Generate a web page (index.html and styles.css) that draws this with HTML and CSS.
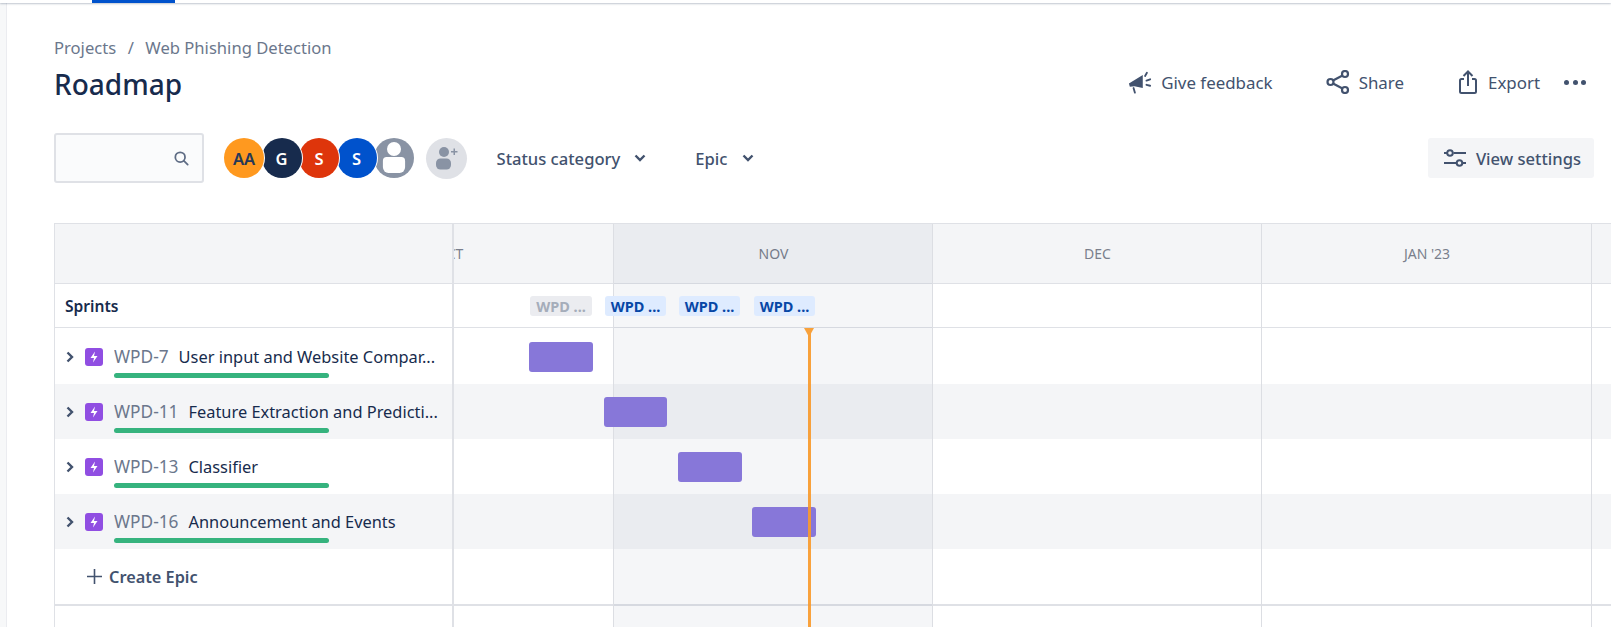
FILE: index.html
```html
<!DOCTYPE html>
<html>
  <head>
    <title>Roadmap</title>
    <link rel="stylesheet" href="styles.css">
  </head>
  <body>
    <div class="topbar"><span class="topbar-tab"></span></div>
    <div class="shell">
      <div class="sidebar"></div>
      <div class="page">
        <div class="page-head">
          <div>
            <div class="crumbs"><span>Projects</span><span class="crumb-sep">/</span><span>Web Phishing Detection</span></div>
            <h1 class="title">Roadmap</h1>
          </div>
          <div class="actions">
            <span class="action action-feedback">
              <svg width="24" height="23" viewBox="0 0 26 24"><path d="M1 13 16 4v14L7 16l-5 0.5z" fill="#42526e"/><path d="M6 18l1.5 5" stroke="#42526e" stroke-width="2" stroke-linecap="round"/><path d="M18.5 5l2-3.5M20 10l4-1.5M20 14.5l4 1" stroke="#42526e" stroke-width="2" stroke-linecap="round"/></svg>
              Give feedback
            </span>
            <span class="action action-share">
              <svg width="24" height="24" viewBox="0 0 24 24" fill="none" stroke="#42526e" stroke-width="2.2"><circle cx="4.5" cy="12" r="3"/><circle cx="19" cy="4" r="3"/><circle cx="19" cy="20" r="3"/><path d="M7 10.5 16.5 5.5M7 13.5l9.5 5"/></svg>
              Share
            </span>
            <span class="action action-export">
              <svg width="18" height="24" viewBox="0 0 18 24" fill="none" stroke="#42526e" stroke-width="2"><path d="M5 9H2.5a1.5 1.5 0 0 0-1.500 1.500V21.500A1.500 1.500 0 0 0 2.500 23h13a1.500 1.500 0 0 0 1.500-1.500V10.500A1.500 1.500 0 0 0 15.500 9H13"/><path d="M9 16V2M4.500 6 9 1.500 13.500 6"/></svg>
              Export
            </span>
            <span class="dots"><i></i><i></i><i></i></span>
          </div>
        </div>

        <div class="toolbar">
          <div class="search">
            <svg width="15" height="15" viewBox="0 0 17 17" fill="none" stroke="#5e6c84" stroke-width="2"><circle cx="7" cy="7" r="5.500"/><path d="M11 11l4.500 4.500" stroke-linecap="round"/></svg>
          </div>
          <div class="avatars">
            <span class="avatar avatar-orange">AA</span>
            <span class="avatar avatar-navy">G</span>
            <span class="avatar avatar-red">S</span>
            <span class="avatar avatar-blue">S</span>
            <span class="avatar avatar-ghost">
              <svg width="40" height="40" viewBox="0 0 40 40"><circle cx="20" cy="11" r="7" fill="#fff"/><path d="M8 23a4 4 0 0 1 4-4h16a4 4 0 0 1 4 4v6a6 6 0 0 1-6 6H14a6 6 0 0 1-6-6z" fill="#fff" transform="translate(1.500 0) scale(.925 1)"/></svg>
            </span>
          </div>
          <span class="add-user">
            <svg width="26" height="26" viewBox="0 0 26 26" fill="#8993a4"><circle cx="11" cy="7" r="5"/><rect x="3" y="13.500" width="15" height="11" rx="4.500"/><path d="M18 6h2.500V3.500h1.500V6h2.500v1.500H22V10h-1.500V7.500H18z"/></svg>
          </span>
          <span class="filter filter-status">Status category<svg class="caret" width="12" height="8" viewBox="0 0 12 8" fill="none" stroke="#42526e" stroke-width="2.400"><path d="M1.500 1.500 6 6l4.500-4.500"/></svg></span>
          <span class="filter filter-epic">Epic<svg class="caret" width="12" height="8" viewBox="0 0 12 8" fill="none" stroke="#42526e" stroke-width="2.400"><path d="M1.500 1.500 6 6l4.500-4.500"/></svg></span>
          <span class="view-settings">
            <svg width="24" height="18" viewBox="0 0 24 18" fill="none" stroke="#42526e" stroke-width="2"><path d="M1 4h3M10.500 4H23M1 14h12.500M20 14h3"/><circle cx="7" cy="4" r="2.800"/><circle cx="16.500" cy="14" r="2.800"/></svg>
            View settings
          </span>
        </div>

        <div class="roadmap">
          <div class="list">
            <div class="list-head"></div>
            <div class="list-sprints">Sprints</div>
            <div class="epic">
              <svg class="chev" width="8" height="12" viewBox="0 0 8 12" fill="none" stroke="#42526e" stroke-width="2.400"><path d="M1.500 1.500 6 6l-4.500 4.500"/></svg>
              <svg class="epic-icon" width="18" height="18" viewBox="0 0 18 18"><rect width="18" height="18" rx="3" fill="#904ee2"/><path d="M10 3.500 5.500 10H9l-1 4.500L12.500 8H9z" fill="#fff"/></svg>
              <div class="epic-body">
                <div class="epic-text"><span class="epic-key">WPD-7</span>User input and Website Compar...</div>
                <div class="progress"></div>
              </div>
            </div>
            <div class="epic alt">
              <svg class="chev" width="8" height="12" viewBox="0 0 8 12" fill="none" stroke="#42526e" stroke-width="2.400"><path d="M1.500 1.500 6 6l-4.500 4.500"/></svg>
              <svg class="epic-icon" width="18" height="18" viewBox="0 0 18 18"><rect width="18" height="18" rx="3" fill="#904ee2"/><path d="M10 3.500 5.500 10H9l-1 4.500L12.500 8H9z" fill="#fff"/></svg>
              <div class="epic-body">
                <div class="epic-text"><span class="epic-key">WPD-11</span>Feature Extraction and Predicti...</div>
                <div class="progress"></div>
              </div>
            </div>
            <div class="epic">
              <svg class="chev" width="8" height="12" viewBox="0 0 8 12" fill="none" stroke="#42526e" stroke-width="2.400"><path d="M1.500 1.500 6 6l-4.500 4.500"/></svg>
              <svg class="epic-icon" width="18" height="18" viewBox="0 0 18 18"><rect width="18" height="18" rx="3" fill="#904ee2"/><path d="M10 3.500 5.500 10H9l-1 4.500L12.500 8H9z" fill="#fff"/></svg>
              <div class="epic-body">
                <div class="epic-text"><span class="epic-key">WPD-13</span>Classifier</div>
                <div class="progress"></div>
              </div>
            </div>
            <div class="epic alt">
              <svg class="chev" width="8" height="12" viewBox="0 0 8 12" fill="none" stroke="#42526e" stroke-width="2.400"><path d="M1.500 1.500 6 6l-4.500 4.500"/></svg>
              <svg class="epic-icon" width="18" height="18" viewBox="0 0 18 18"><rect width="18" height="18" rx="3" fill="#904ee2"/><path d="M10 3.500 5.500 10H9l-1 4.500L12.500 8H9z" fill="#fff"/></svg>
              <div class="epic-body">
                <div class="epic-text"><span class="epic-key">WPD-16</span>Announcement and Events</div>
                <div class="progress"></div>
              </div>
            </div>
            <div class="create">
              <svg width="15" height="15" viewBox="0 0 15 15" stroke="#42526e" stroke-width="1.600"><path d="M7.500 0v15M0 7.500h15"/></svg>
              Create Epic
            </div>
          </div>

          <div class="chart">
            <div class="months">
              <div class="month m-oct">OCT</div>
              <div class="month m-nov">NOV</div>
              <div class="month m-dec">DEC</div>
              <div class="month m-jan">JAN '23</div>
              <div class="month m-feb"></div>
            </div>
            <div class="chart-sprints">
              <span class="chip chip-past" style="left:76px;width:62px">WPD ...</span>
              <span class="chip" style="left:151px;width:61px">WPD ...</span>
              <span class="chip" style="left:225px;width:61px">WPD ...</span>
              <span class="chip" style="left:300px;width:61px">WPD ...</span>
            </div>
            <div class="lane"><span class="bar" style="left:75px;width:64px"></span></div>
            <div class="lane alt"><span class="bar" style="left:150px;width:63px"></span></div>
            <div class="lane"><span class="bar" style="left:224px;width:64px"></span></div>
            <div class="lane alt"><span class="bar" style="left:298px;width:64px"></span></div>
            <div class="lane-create"></div>

            <div class="grid-cols">
              <div class="col m-oct"></div>
              <div class="col col-now m-nov"></div>
              <div class="col m-dec"></div>
              <div class="col m-jan"></div>
            </div>
            <div class="today"></div>
          </div>
        </div>
      </div>
    </div>
  </body>
</html>
```

FILE: styles.css
```css
html, body {
  margin: 0;
  height: 100%;
  overflow: hidden;
  background: #fff;
}
body {
  font-family: "Noto Sans", "Open Sans", Arial, sans-serif;
  font-size: 16.6px;
  color: #172b4d;
}
svg {
  display: block;
  flex: none;
}

.topbar {
  height: 3px;
  background: #fff;
  box-shadow: 0 1px 2px rgba(9, 30, 66, .25);
  position: relative;
}
.topbar-tab {
  display: block;
  width: 83px;
  height: 3px;
  margin-left: 92px;
  background: #0052cc;
}

.shell {
  display: flex;
  height: 624px;
}
.sidebar {
  width: 6px;
  background: #f7f8f9;
  border-right: 1px solid #ebecf0;
}
.page {
  flex: 1;
  min-width: 0;
  padding-left: 47px;
}

.page-head {
  display: flex;
  justify-content: space-between;
  padding-top: 34px;
  height: 127px;
  box-sizing: border-box;
}
.crumbs {
  display: flex;
  color: #6b778c;
  line-height: 22px;
}
.crumb-sep {
  margin: 0 11.500px;
}
.title {
  margin: 7px 0 0;
  font-size: 28px;
  line-height: 36px;
  font-weight: 500;
}
.actions {
  display: flex;
  align-items: center;
  height: 36px;
  margin-top: 27px;
  padding-right: 25px;
  color: #42526e;
  font-size: 16.900px;
}
.action {
  display: flex;
  align-items: center;
  gap: 9px;
}
.action-share {
  margin-left: 53px;
}
.action-export {
  margin-left: 55px;
  gap: 11px;
}
.dots {
  display: flex;
  gap: 3.500px;
  margin-left: 24px;
}
.dots i {
  width: 5px;
  height: 5px;
  border-radius: 50%;
  background: #42526e;
}

.toolbar {
  display: flex;
  align-items: center;
  height: 50px;
  margin-top: 3px;
  padding-right: 17px;
}
.search {
  width: 150px;
  height: 50px;
  box-sizing: border-box;
  display: flex;
  align-items: center;
  justify-content: flex-end;
  padding-right: 13px;
  background: #fafbfc;
  border: 2px solid #dfe1e6;
  border-radius: 3px;
}
.avatars {
  display: flex;
  margin-left: 20px;
}
.avatar {
  width: 40px;
  height: 40px;
  margin-right: -2.500px;
  border-radius: 50%;
  display: flex;
  align-items: center;
  justify-content: center;
  overflow: hidden;
  color: #fff;
  font-size: 16.5px;
  font-weight: 600;
  box-shadow: 0 0 0 1px #fff;
}
.avatar-orange { background: #ff991f; color: #253858; z-index: 5; }
.avatar-navy { background: #172b4d; z-index: 4; }
.avatar-red { background: #de350b; z-index: 3; }
.avatar-blue { background: #0052cc; z-index: 2; }
.avatar-ghost { background: #8993a4; z-index: 1; }
.add-user {
  width: 41px;
  height: 41px;
  margin-left: 14px;
  border-radius: 50%;
  background: #dfe1e6;
  display: flex;
  align-items: center;
  justify-content: center;
}
.filter {
  display: flex;
  align-items: center;
  gap: 14px;
  color: #42526e;
  font-weight: 500;
}
.filter-status {
  margin-left: 30px;
}
.filter-epic {
  margin-left: 49px;
}
.view-settings {
  margin-left: auto;
  height: 40px;
  display: flex;
  align-items: center;
  gap: 9px;
  padding: 0 13px 0 15px;
  background: #f4f5f7;
  border-radius: 3px;
  color: #42526e;
  font-weight: 500;
}

.roadmap {
  display: grid;
  grid-template-columns: 399px 1fr;
  height: 404px;
  margin-top: 40px;
  border-top: 1px solid #dfe1e6;
  border-left: 1px solid #dfe1e6;
}
.list {
  border-right: 2px solid #dfe1e6;
  min-width: 0;
}
.list-head {
  height: 59px;
  background: #f4f5f7;
  border-bottom: 1px solid #dfe1e6;
}
.list-sprints {
  height: 43px;
  padding-left: 10px;
  display: flex;
  align-items: center;
  font-size: 15.600px;
  font-weight: 600;
  border-bottom: 1px solid #dfe1e6;
}
.epic {
  height: 55px;
  padding: 0 0 0 11px;
  display: flex;
  align-items: flex-start;
  box-sizing: border-box;
}
.epic:nth-child(3) {
  height: 56px;
  padding-top: 1px;
}
.alt {
  background: #f4f5f7;
}
.chev {
  margin-top: 22px;
}
.epic-icon {
  margin: 19px 0 0 11px;
}
.epic-body {
  margin-left: 11px;
  flex: 1;
  min-width: 0;
}
.epic-text {
  margin-top: 16px;
  line-height: 24px;
  font-size: 16.400px;
  white-space: nowrap;
  overflow: hidden;
}
.epic-key {
  color: #6b778c;
  margin-right: 10px;
  font-size: 17.300px;
}
.progress {
  width: 215px;
  height: 5px;
  margin-top: 4px;
  background: #36b37e;
  border-radius: 3px;
}
.create {
  height: 57px;
  padding-left: 32px;
  display: flex;
  align-items: center;
  gap: 7px;
  box-sizing: border-box;
  font-size: 16.300px;
  font-weight: 600;
  color: #42526e;
  border-bottom: 2px solid #dfe1e6;
}

.chart {
  position: relative;
  overflow: hidden;
  min-width: 0;
}
.months {
  display: flex;
  height: 59px;
  margin-left: -169px;
  background: #f4f5f7;
  border-bottom: 1px solid #dfe1e6;
}
.month {
  display: flex;
  align-items: center;
  justify-content: center;
  flex: none;
  font-size: 14px;
  color: #7a7f8c;
}
.m-oct { width: 329px; }
.m-nov { width: 319px; }
.m-dec { width: 329px; }
.m-jan { width: 330px; }
.m-feb { width: 200px; }
.chart-sprints {
  position: relative;
  height: 43px;
  border-bottom: 1px solid #dfe1e6;
}
.chip {
  position: absolute;
  top: 12px;
  height: 20px;
  z-index: 2;
  display: flex;
  align-items: center;
  justify-content: center;
  background: #deebff;
  color: #0747a6;
  border-radius: 3px;
  font-size: 14.500px;
  font-weight: 700;
}
.chip-past {
  background: #ebecf0;
  color: #a5adba;
}
.lane {
  position: relative;
  height: 55px;
}
.lane:nth-child(3) {
  height: 56px;
}
.bar {
  position: absolute;
  top: 13px;
  height: 30px;
  z-index: 2;
  background: #8777d9;
  border-radius: 3px;
}
.lane:nth-child(3) .bar {
  top: 14px;
}
.lane-create {
  height: 57px;
  box-sizing: border-box;
  border-bottom: 2px solid #dfe1e6;
}

/* month columns, laid over the lanes */
.grid-cols {
  position: absolute;
  top: 0;
  bottom: 0;
  left: -169px;
  display: flex;
  z-index: 1;
}
.col {
  box-sizing: border-box;
  flex: none;
  border-right: 1px solid #dcdee3;
}
.col-now {
  background: rgba(9, 30, 66, .04);
}
.today {
  position: absolute;
  top: 104px;
  bottom: 0;
  left: 354px;
  width: 3px;
  z-index: 3;
  background: #f99a2c;
  opacity: .92;
}
.today::before {
  content: "";
  position: absolute;
  top: 0;
  left: -4px;
  border-left: 5.500px solid transparent;
  border-right: 5.500px solid transparent;
  border-top: 9px solid #f99a2c;
}
```
